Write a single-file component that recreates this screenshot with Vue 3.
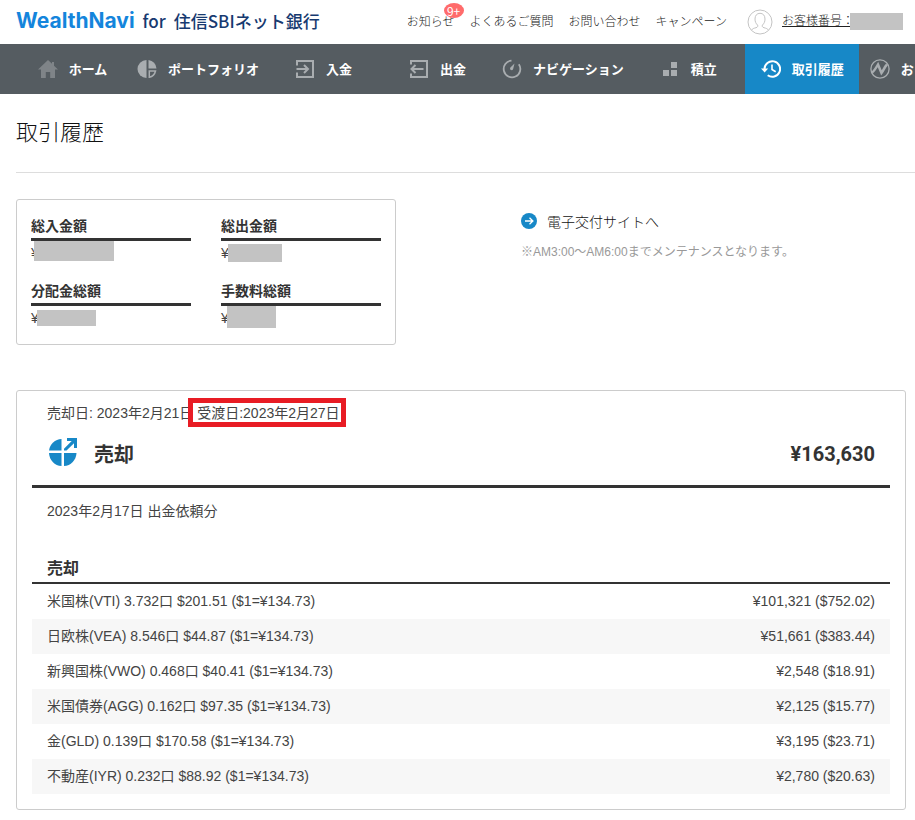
<template>
  <div class="page">
    <header class="header">
      <a class="logo" href="#">
        <span class="logo-main">WealthNavi</span>
        <span class="logo-for">for</span>
        <span class="logo-bank">住信SBIネット銀行</span>
      </a>
      <div class="header-links">
        <a v-for="link in headerLinks" :key="link.text" class="header-link" href="#">
          {{ link.text }}<span v-if="link.badge" class="badge">{{ link.badge }}</span>
        </a>
      </div>
      <a class="account" href="#">
        <svg class="avatar" viewBox="0 0 26 26" fill="none" stroke="#c4c4c4">
          <circle cx="13" cy="13" r="12" />
          <path d="M4.5 21.2c.9-1.6 2.400-1.900 4.500-2.500 1.700-.5 2-1.300 1.600-2.600C8.900 14.600 8 12.600 8 10c0-3.500 1.900-5.700 5-5.700s5 2.200 5 5.700c0 2.600-.9 4.600-2.600 6.100-.4 1.300-.1 2.100 1.600 2.600 2.100.6 3.600.9 4.500 2.500" />
        </svg>
        <span class="account-label">お客様番号：</span>
        <span class="account-mask"></span>
      </a>
    </header>

    <nav class="nav">
      <a
        v-for="item in navItems"
        :key="item.icon"
        class="nav-item"
        :class="{ active: item.active, dim: item.icon === 'home', last: item.icon === 'navi' }"
        href="#"
      >
        <svg class="nav-icon" viewBox="0 0 20 20" fill="none" stroke="currentColor" stroke-width="2">
          <path v-if="item.icon === 'home'" d="M10 1 0 10.500h3V19h4.800v-6h4.400v6H17v-8.500h3L16 6.700V3h-2v1.800z" fill="currentColor" stroke="none" />
          <g v-else-if="item.icon === 'pie'" stroke="none" fill="currentColor">
            <path d="M9.500 1v18A9 9 0 0 1 9.500 1z" />
            <path d="M11.500 1a9 9 0 0 1 8 8.500h-8z" />
            <path d="M12.300 12h6.200a8 8 0 0 1-6.200 6.200z" fill="none" stroke="currentColor" stroke-width="1.500" />
          </g>
          <g v-else-if="item.icon === 'in'">
            <path d="M2 6.500V2h16v16H2v-4.500" />
            <path d="M1.500 10h11M9 6l4 4-4 4" />
          </g>
          <g v-else-if="item.icon === 'out'">
            <path d="M2 5.500V2h16v16H2v-3.500" />
            <path d="M14.500 10H3M6.500 6l-4 4 4 4" />
          </g>
          <g v-else-if="item.icon === 'gauge'">
            <path d="M9.500 1.700A8.300 8.300 0 1 0 16.800 5.200" stroke-width="1.800" />
            <path d="M12.500 4.500 8.200 8.800a1.600 1.600 0 1 0 3 1z" fill="currentColor" stroke="none" />
          </g>
          <path v-else-if="item.icon === 'blocks'" d="M11 3h6v6h-6zM3 11h6v6H3zM11 11h6v6h-6z" fill="currentColor" stroke="none" />
          <g v-else-if="item.icon === 'history'">
            <path d="M3.500 10a7.800 7.800 0 1 1 3.200 6.300" />
            <path d="M0 9.500h7.200l-3.600 4z" fill="currentColor" stroke="none" />
            <path d="M11 5.500v5l3.700 2.200" stroke-width="1.600" />
          </g>
          <g v-else>
            <circle cx="10" cy="10" r="9.100" stroke-width="1.300" />
            <path d="M2 13.500C4 12.500 6 9 8 5.500l3.500 8.500c2-2.500 3-6 5.500-8.500" stroke-width="2.500" />
          </g>
        </svg>
        <span>{{ item.text }}</span>
      </a>
    </nav>

    <main class="main">
      <h1 class="title">取引履歴</h1>

      <section class="overview">
        <dl class="summary">
          <div v-for="item in summary" :key="item.label" class="summary-item">
            <dt>{{ item.label }}</dt>
            <dd>¥<span class="mask" :style="maskStyle(item.mask)"></span></dd>
          </div>
        </dl>
        <div class="delivery">
          <a class="delivery-link" href="#">
            <svg class="delivery-icon" viewBox="0 0 16 16">
              <circle cx="8" cy="8" r="8" fill="#1788c7" />
              <path d="M4 8h8M8.500 4.700 11.900 8l-3.400 3.300" fill="none" stroke="#fff" stroke-width="1.300" />
            </svg>
            電子交付サイトへ
          </a>
          <p class="delivery-note">※AM3:00〜AM6:00までメンテナンスとなります。</p>
        </div>
      </section>

      <section class="card">
        <p class="dates">売却日: 2023年2月21日 <span class="marked">受渡日:2023年2月27日</span></p>
        <div class="card-head">
          <svg class="sell-icon" viewBox="0 0 28 28" fill="#1788c7">
            <path d="M12.500 1v11.500H0A13 13 0 0 1 12.500 1z" />
            <path d="M0 15h12.500v13A13.500 13.500 0 0 1 0 15z" />
            <path d="M15 15h12.500A13.500 13.500 0 0 1 15 28z" />
            <path d="M18 0h10v10h-3V5.300l-7.500 7.200H15v-1.800L22.700 3H18z" />
          </svg>
          <h2>売却</h2>
          <strong class="total">¥163,630</strong>
        </div>
        <p class="request">2023年2月17日 出金依頼分</p>
        <h3 class="detail-title">売却</h3>
        <table class="detail">
          <tbody>
            <tr v-for="row in rows" :key="row.name">
              <td>{{ row.name }}</td>
              <td class="amount">{{ row.amount }}</td>
            </tr>
          </tbody>
        </table>
      </section>
    </main>
  </div>
</template>

<script setup>
const headerLinks = [
  { text: 'お知らせ', badge: '9+' },
  { text: 'よくあるご質問' },
  { text: 'お問い合わせ' },
  { text: 'キャンペーン' }
]

const navItems = [
  { icon: 'home', text: 'ホーム' },
  { icon: 'pie', text: 'ポートフォリオ' },
  { icon: 'in', text: '入金' },
  { icon: 'out', text: '出金' },
  { icon: 'gauge', text: 'ナビゲーション' },
  { icon: 'blocks', text: '積立' },
  { icon: 'history', text: '取引履歴', active: true },
  { icon: 'navi', text: 'お' }
]

// mask: [left, top, width, height]
const summary = [
  { label: '総入金額', mask: [3, 0, 80, 20] },
  { label: '総出金額', mask: [7, 3, 54, 18] },
  { label: '分配金総額', mask: [6, 4, 59, 16] },
  { label: '手数料総額', mask: [6, 0, 49, 22] }
]

const rows = [
  { name: '米国株(VTI) 3.732口 $201.51 ($1=¥134.73)', amount: '¥101,321 ($752.02)' },
  { name: '日欧株(VEA) 8.546口 $44.87 ($1=¥134.73)', amount: '¥51,661 ($383.44)' },
  { name: '新興国株(VWO) 0.468口 $40.41 ($1=¥134.73)', amount: '¥2,548 ($18.91)' },
  { name: '米国債券(AGG) 0.162口 $97.35 ($1=¥134.73)', amount: '¥2,125 ($15.77)' },
  { name: '金(GLD) 0.139口 $170.58 ($1=¥134.73)', amount: '¥3,195 ($23.71)' },
  { name: '不動産(IYR) 0.232口 $88.92 ($1=¥134.73)', amount: '¥2,780 ($20.63)' }
]

const maskStyle = ([left, top, width, height]) => ({
  left: `${left}px`,
  top: `${top}px`,
  width: `${width}px`,
  height: `${height}px`
})
</script>

<style>
body {
  margin: 0;
  background: #fff;
}
</style>

<style scoped>
.page {
  overflow: hidden;
  color: #333;
  font-family: "Noto Sans CJK JP", sans-serif;
  font-size: 14px;
  font-weight: 300;
  line-height: 20px;
}

.page * {
  box-sizing: border-box;
}

a {
  color: inherit;
  text-decoration: none;
}

h1,
h2,
h3,
p,
dl,
dd {
  margin: 0;
}

.header {
  display: flex;
  align-items: center;
  height: 44px;
  padding: 0 12px 3px 16px;
  color: #222;
  white-space: nowrap;
}

.logo {
  display: flex;
  align-items: center;
  gap: 8px;
  color: #173a70;
}

.logo-main {
  color: #1485dc;
  font-family: Inter, sans-serif;
  font-size: 21px;
  font-weight: 700;
}

.logo-for,
.logo-bank {
  font-size: 17px;
  font-weight: 500;
}

.header-links {
  display: flex;
  gap: 15px;
  margin-left: auto;
  font-size: 12px;
}

.header-link {
  position: relative;
}

.badge {
  position: absolute;
  top: -8px;
  right: -9px;
  width: 20px;
  height: 15px;
  border-radius: 50%;
  background: #ff6b6b;
  color: #fff;
  font-weight: 400;
  line-height: 15px;
  text-align: center;
}

.account {
  display: flex;
  align-items: center;
  margin: 2px 0 0 20px;
  font-size: 12px;
}

.avatar {
  width: 26px;
  height: 26px;
  margin-right: 9px;
}

.account-label {
  width: 68px;
  height: 14px;
  margin-bottom: 4px;
  border-bottom: 1px solid #222;
  line-height: 13px;
}

.account-mask {
  width: 53px;
  height: 17px;
  background: #c3c3c3;
}

.nav {
  display: flex;
  height: 50px;
  padding-left: 15px;
  background: #555c61;
  color: #fff;
  font-size: 13px;
  font-weight: 700;
  white-space: nowrap;
}

.nav-item {
  display: flex;
  flex: none;
  align-items: center;
  justify-content: center;
  gap: 11px;
  min-width: 114px;
  padding: 0 7px 0 8px;
}

.nav-item.active {
  background: #1788c7;
}

.nav-item.last {
  justify-content: flex-start;
  padding-left: 11px;
}

.nav-icon {
  width: 20px;
  height: 20px;
  color: #a9adb0;
}

.dim .nav-icon {
  color: #7f8488;
}

.active .nav-icon {
  color: #fff;
}

.main {
  padding: 0 0 10px 16px;
}

.title {
  padding: 20px 0 26px;
  border-bottom: 1px solid #ddd;
  color: #111;
  font-size: 22px;
  font-weight: 300;
  line-height: 32px;
}

.overview {
  display: flex;
  gap: 125px;
  margin-top: 26px;
}

.summary {
  display: grid;
  grid-template-columns: 160px 160px;
  gap: 0 30px;
  padding: 14px 14px 0;
  border: 1px solid #ccc;
  border-radius: 3px;
}

.summary-item {
  height: 65px;
}

.summary dt {
  padding: 1px 0 3px;
  border-bottom: 3px solid #333;
  font-weight: 700;
}

.summary dd,
.delivery-note,
.dates,
.request,
.detail {
  color: #444;
  font-family: "Liberation Sans", "Noto Sans CJK JP", sans-serif;
  font-weight: 400;
}

.summary dd {
  position: relative;
  line-height: 24px;
}

.mask {
  position: absolute;
  background: #c3c3c3;
}

.delivery {
  padding-top: 12px;
}

.delivery-link {
  display: flex;
  align-items: center;
  gap: 10px;
  color: #111;
}

.delivery-icon {
  width: 16px;
  height: 16px;
}

.delivery-note {
  margin-top: 11px;
  color: #999;
  font-size: 12px;
}

.card {
  margin: 45px 9px 0 0;
  padding: 12px 15px 15px;
  border: 1px solid #ccc;
  border-radius: 3px;
}

.dates,
.request {
  padding-left: 15px;
}

.marked {
  display: inline-block;
  position: relative;
}

.marked::after {
  content: '';
  position: absolute;
  top: -5px;
  right: -6px;
  bottom: -4px;
  left: -9px;
  border: 5px solid #e81c24;
}

.card-head {
  display: flex;
  align-items: center;
  height: 65px;
  padding: 0 15px 0 17px;
  border-bottom: 3px solid #333;
}

.sell-icon {
  width: 28px;
  height: 28px;
  margin: 0 17px 4px 0;
}

.card-head h2,
.total {
  font-size: 20px;
  font-weight: 700;
}

.total {
  margin-left: auto;
  font-family: Roboto, "Noto Sans CJK JP", sans-serif;
}

.request {
  margin-top: 13px;
}

.detail-title {
  margin-top: 36px;
  padding: 0 15px 5px;
  border-bottom: 2px solid #333;
  font-size: 16px;
  font-weight: 700;
}

.detail {
  width: 100%;
  border-collapse: collapse;
}

.detail tr {
  height: 35px;
}

.detail tr:nth-child(even) {
  background: #f7f7f7;
}

.detail td {
  padding: 0 15px 2px;
}

.detail .amount {
  text-align: right;
}
</style>
